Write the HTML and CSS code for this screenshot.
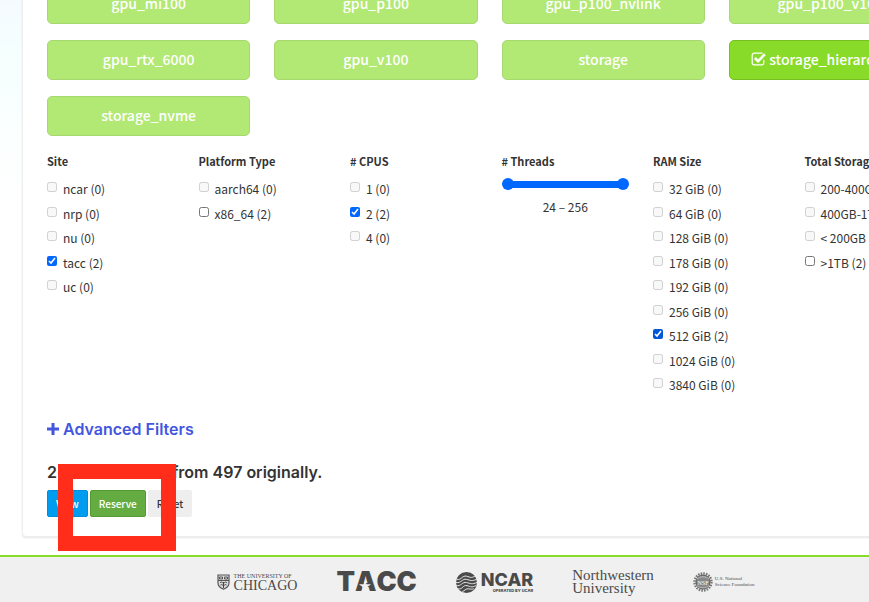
FILE: index.html
```html
<!DOCTYPE html>
<html lang="en">
<head>
    <meta charset="UTF-8">
    <meta name="viewport" content="width=device-width, initial-scale=1.0">
    <title>Hardware Discovery</title>
    <link rel="stylesheet" href="styles.css">
</head>
<body>
    <main class="panel">
        <div class="node-types">
            <button type="button" class="type-btn">gpu_mi100</button>
            <button type="button" class="type-btn">gpu_p100</button>
            <button type="button" class="type-btn">gpu_p100_nvlink</button>
            <button type="button" class="type-btn">gpu_p100_v100</button>
            <button type="button" class="type-btn">gpu_rtx_6000</button>
            <button type="button" class="type-btn">gpu_v100</button>
            <button type="button" class="type-btn">storage</button>
            <button type="button" class="type-btn selected">
                <svg class="check-icon" viewBox="0 0 15 14" aria-hidden="true">
                    <path d="M11 1.2H3.2a2 2 0 0 0-2 2v7.6a2 2 0 0 0 2 2h7.6a2 2 0 0 0 2-2V8.4" fill="none" stroke="#fff" stroke-width="1.2" stroke-linecap="round"/>
                    <path d="M3.9 6l3.2 3.2 6.8-7" fill="none" stroke="#fff" stroke-width="2.6"/>
                </svg>
                storage_hierarchy
            </button>
            <button type="button" class="type-btn">storage_nvme</button>
        </div>

        <div class="filters">
            <fieldset class="filter">
                <legend>Site</legend>
                <label><input type="checkbox" disabled> ncar (0)</label>
                <label><input type="checkbox" disabled> nrp (0)</label>
                <label><input type="checkbox" disabled> nu (0)</label>
                <label><input type="checkbox" checked> tacc (2)</label>
                <label><input type="checkbox" disabled> uc (0)</label>
            </fieldset>
            <fieldset class="filter">
                <legend>Platform Type</legend>
                <label><input type="checkbox" disabled> aarch64 (0)</label>
                <label><input type="checkbox"> x86_64 (2)</label>
            </fieldset>
            <fieldset class="filter">
                <legend># CPUS</legend>
                <label><input type="checkbox" disabled> 1 (0)</label>
                <label><input type="checkbox" checked> 2 (2)</label>
                <label><input type="checkbox" disabled> 4 (0)</label>
            </fieldset>
            <fieldset class="filter">
                <legend># Threads</legend>
                <div class="range">
                    <input type="range" min="24" max="256" value="24" aria-label="Minimum threads">
                    <input type="range" class="range-max" min="24" max="256" value="256" aria-label="Maximum threads">
                </div>
                <div class="range-value">24 – 256</div>
            </fieldset>
            <fieldset class="filter">
                <legend>RAM Size</legend>
                <label><input type="checkbox" disabled> 32 GiB (0)</label>
                <label><input type="checkbox" disabled> 64 GiB (0)</label>
                <label><input type="checkbox" disabled> 128 GiB (0)</label>
                <label><input type="checkbox" disabled> 178 GiB (0)</label>
                <label><input type="checkbox" disabled> 192 GiB (0)</label>
                <label><input type="checkbox" disabled> 256 GiB (0)</label>
                <label><input type="checkbox" class="active" checked> 512 GiB (2)</label>
                <label><input type="checkbox" disabled> 1024 GiB (0)</label>
                <label><input type="checkbox" disabled> 3840 GiB (0)</label>
            </fieldset>
            <fieldset class="filter">
                <legend>Total Storage</legend>
                <label><input type="checkbox" disabled> 200-400GB (0)</label>
                <label><input type="checkbox" disabled> 400GB-1TB (0)</label>
                <label><input type="checkbox" disabled> &lt; 200GB (0)</label>
                <label><input type="checkbox"> &gt;1TB (2)</label>
            </fieldset>
        </div>

        <h4 class="advanced">
            <a href="#advanced">
                <svg viewBox="0 0 12 12" aria-hidden="true"><path d="M4.500 0h3v4.500H12v3H7.500V12h-3V7.500H0v-3h4.500z" fill="#4356e0"/></svg>
                Advanced Filters
            </a>
        </h4>

        <div class="results">
            <h4>2 nodes filtered from 497 originally.</h4>
            <div class="actions">
                <button type="button" class="btn btn-view">View</button>
                <button type="button" class="btn btn-reserve">Reserve</button>
                <button type="button" class="btn btn-reset">Reset</button>
            </div>
            <div class="highlight"></div>
        </div>
    </main>

    <footer class="footer">
        <a href="#uchicago" class="logo uchicago">
            <svg viewBox="0 0 13 16" aria-hidden="true">
                <path d="M1 1h11v8c0 3-2.500 5-5.500 6.200C3.500 14 1 12 1 9z" fill="#ddd" stroke="#555" stroke-width="1.200"/>
                <path d="M1 6.500h11M2.500 3h3v2h-3zM7.500 3h3v2h-3z" fill="none" stroke="#555"/>
                <path d="M3 9c1-1.500 2-1 3.500.500C8 8 9 7.500 10 9M3.500 11c1-1 2 0 3 1 1-1 2-2 3-1M6.500 8v6" fill="none" stroke="#444"/>
            </svg>
            <span class="logo-text"><small>THE UNIVERSITY OF</small>CHICAGO</span>
        </a>
        <a href="#tacc" class="logo tacc">
            T<span class="star-letter">A<svg viewBox="0 0 12 12" aria-hidden="true"><path d="M6 0l1.500 4.200H12L8.400 7l1.300 4.500L6 8.800l-3.700 2.700L3.600 7 0 4.200h4.500z" fill="#f0f0f0"/></svg></span>CC
        </a>
        <a href="#ncar" class="logo ncar">
            <svg viewBox="0 0 20 20" aria-hidden="true">
                <circle cx="10" cy="10" r="10" fill="#4a4a4a"/>
                <path d="M1 7c4 1 5-4 9-3s4 2 8 0M0 10c5 1 6-4 10-3s5 2 9.500 0M0 13c5 1 6-4 10-3s5 2 10 0M1.500 16c5 1 5-4 9-3s4 2 8.500 0M6 18.500c2 0 3-3 6-2.500s3 .5 5 0" fill="none" stroke="#f0f0f0" stroke-width=".9"/>
            </svg>
            <span class="logo-text">NCAR<small>OPERATED BY UCAR</small></span>
        </a>
        <a href="#northwestern" class="logo northwestern">Northwestern<br>University</a>
        <a href="#nsf" class="logo nsf">
            <svg viewBox="0 0 20 20" aria-hidden="true">
                <circle cx="10" cy="10" r="8.500" fill="none" stroke="#777" stroke-width="2.400" stroke-dasharray="1.600 1.070"/>
                <circle cx="10" cy="10" r="7" fill="#888" stroke="#555"/>
                <path d="M4 7c3-3 9-3 12 0M4 13.500c3 3 9 3 12 0" fill="none" stroke="#bbb"/>
                <text x="10" y="12.500" class="nsf-mark">NSF</text>
            </svg>
            <span>U.S. National<br>Science Foundation</span>
        </a>
    </footer>
</body>
</html>
```

FILE: styles.css
```css
* {
    box-sizing: border-box;
}
html {
    overflow: hidden;
}
body {
    display: flow-root;
    min-width: 979px;
    margin: 0;
    font-family: "Noto Sans CJK SC", "Noto Sans", sans-serif;
    font-size: 12px;
    color: #333;
    background: linear-gradient(#f5faff, #f5fffe 50px, #fff 200px);
}
button {
    font-family: inherit;
    cursor: pointer;
}
a {
    text-decoration: none;
}

/* main panel */
.panel {
    margin: -40px 22px 18px;
    padding: 23px 24px 19px;
    background: #fff;
    border: 1px solid #eee;
    border-radius: 4px;
    box-shadow: 0 1px 2px rgba(0, 0, 0, 0.1);
}
.node-types {
    display: grid;
    grid-template-columns: repeat(4, 1fr);
    gap: 16px 24px;
}
.type-btn {
    height: 40px;
    padding: 0 0 2px;
    font-size: 14px;
    font-weight: 500;
    line-height: 20px;
    color: #fff;
    background: #b2e874;
    border: 1px solid #a7d870;
    border-radius: 5px;
}
.type-btn.selected {
    padding-right: 20px;
    background: #89db29;
    border-color: #78c020;
}
.check-icon {
    width: 15px;
    height: 14px;
    vertical-align: -1px;
}

/* filters */
.filters {
    display: grid;
    grid-template-columns: repeat(6, 1fr);
    gap: 24px;
    margin-top: 15px;
}
.filter {
    min-width: 0;
    margin: 0;
    padding: 0;
    border: 0;
}
.filter legend {
    margin-bottom: 6px;
    padding: 0;
    font-size: 11px;
    font-weight: 700;
    line-height: 20px;
}
.filter label {
    display: flex;
    align-items: center;
    line-height: 24px;
    white-space: nowrap;
}
.filter label:nth-of-type(even) {
    margin-top: 1px;
}
.filter input[type="checkbox"] {
    width: 10px;
    height: 10px;
    margin: 0 6px 4px 0;
    accent-color: #0067ff;
}
.filter input.active {
    accent-color: #0057d8;
}
.range {
    position: relative;
    height: 14px;
    padding-top: 1px;
}
.range input {
    display: block;
    width: 100%;
    height: 12px;
    margin: 0;
    appearance: none;
    background: linear-gradient(#0067ff, #0067ff) center / calc(100% - 8px) 7px no-repeat;
}
.range input::-webkit-slider-thumb {
    appearance: none;
    width: 12px;
    height: 12px;
    border-radius: 50%;
    background: #0067ff;
}
.range .range-max {
    position: absolute;
    top: 1px;
    left: 0;
    background: none;
}
.range-value {
    margin-top: 6px;
    line-height: 20px;
    text-align: center;
}

/* results */
h4 {
    margin: 0;
    font-family: Inter, sans-serif;
    font-size: 16px;
    font-weight: 600;
    line-height: 20px;
}
.advanced {
    margin-top: 22px;
}
.advanced a {
    color: #4356e0;
}
.advanced svg {
    width: 12px;
    height: 12px;
}
.results {
    position: relative;
    margin-top: 23px;
}
.actions {
    display: flex;
    gap: 2px;
    margin-top: 8px;
}
.btn {
    height: 27px;
    padding: 0 8px;
    font-size: 10px;
    font-weight: 500;
    color: #fff;
    border: 1px solid;
    border-radius: 2px;
}
.btn-view {
    background: #009cf0;
    border-color: #008ddd;
}
.btn-reserve {
    background: #64ac41;
    border-color: #559b35;
}
.btn-reset {
    color: #333;
    background: #eee;
    border-color: #eee;
}
.highlight {
    position: absolute;
    top: 2px;
    left: 11px;
    width: 118px;
    height: 87px;
    border: 15px solid #ff2d1a;
}

/* footer */
.footer {
    display: flex;
    justify-content: center;
    align-items: center;
    gap: 39px;
    height: 60px;
    padding: 0 8px 8px 0;
    background: #f0f0f0;
    border-top: 2px solid #89db29;
}
.logo {
    display: flex;
    align-items: center;
    gap: 4px;
    color: #4a4a4a;
    white-space: nowrap;
}
.logo-text small {
    display: block;
}
.uchicago {
    font-family: "Liberation Serif", serif;
    font-size: 14px;
    line-height: 13px;
}
.uchicago svg {
    width: 13px;
    height: 16px;
}
.uchicago small {
    font-size: 6px;
    line-height: 6px;
}
.tacc {
    gap: 0;
    font-family: Inter, sans-serif;
    font-size: 27px;
    font-weight: 900;
    line-height: 28px;
}
.star-letter {
    position: relative;
}
.star-letter svg {
    position: absolute;
    bottom: 4px;
    left: 4px;
    width: 12px;
    height: 12px;
}
.ncar {
    font-family: Inter, sans-serif;
    font-size: 18px;
    font-weight: 800;
    line-height: 18px;
}
.ncar svg {
    width: 21px;
    height: 21px;
}
.ncar small {
    font-size: 4px;
    line-height: 4px;
    text-align: right;
}
.northwestern {
    font-family: "Liberation Serif", serif;
    font-size: 15px;
    line-height: 13px;
}
.nsf {
    gap: 2px;
    font-family: "Liberation Serif", serif;
    font-size: 5px;
    line-height: 6px;
}
.nsf svg {
    width: 20px;
    height: 20px;
}
.nsf-mark {
    font-size: 6px;
    fill: #fff;
    text-anchor: middle;
}
```
